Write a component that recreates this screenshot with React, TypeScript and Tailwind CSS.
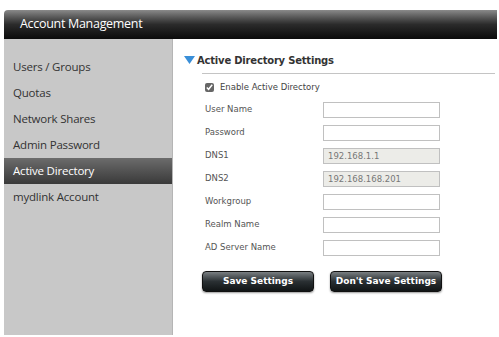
const menuItems = [
	'Users / Groups',
	'Quotas',
	'Network Shares',
	'Admin Password',
	'Active Directory',
	'mydlink Account',
]

const fields = [
	{ label: 'User Name', value: '', disabled: false },
	{ label: 'Password', value: '', disabled: false },
	{ label: 'DNS1', value: '192.168.1.1', disabled: true },
	{ label: 'DNS2', value: '192.168.168.201', disabled: true },
	{ label: 'Workgroup', value: '', disabled: false },
	{ label: 'Realm Name', value: '', disabled: false },
	{ label: 'AD Server Name', value: '', disabled: false },
]

const DarkButton = ({ children }: { children: string }) => (
	<button className="w-[112px] h-[21px] rounded-[4px] border border-[#111] bg-gradient-to-b from-[#7a7f82] via-[#2a3033] to-[#111516] text-white text-[9px] font-bold font-['DejaVu_Sans',sans-serif] shadow-[0_1px_2px_rgba(0,0,0,0.4)]">
		{children}
	</button>
)

const App = () => {
	return (
		<div className="w-[499px] h-[337px] bg-white pt-[10px] pl-[4px] font-['Open_Sans',sans-serif]">
			<div className="w-[493px]">
				<header className="h-[29px] rounded-tl-[4px] bg-gradient-to-b from-[#8a8a8a] via-[#2b2b2b] to-[#0b0b0b] flex items-center pl-[16px]">
					<h1 className="text-white text-[12.5px] tracking-[-0.3px]">
						Account Management
					</h1>
				</header>

				<div className="flex">
					<nav className="w-[169px] h-[296px] bg-[#c8c8c8] border-r border-[#b5b5b5] pt-[15px]">
						{menuItems.map(item => (
							<div
								key={item}
								className={
									item === 'Active Directory'
										? 'h-[26px] flex items-center pl-[9px] text-[11.5px] tracking-[-0.2px] text-white bg-gradient-to-b from-[#6c6c6c] to-[#3a3a3a]'
										: 'h-[26px] flex items-center pl-[9px] text-[11.5px] tracking-[-0.2px] text-[#333]'
								}
							>
								{item}
							</div>
						))}
					</nav>

					<section className="flex-1 pl-[11px] pt-[14px] font-['DejaVu_Sans',sans-serif]">
						<div className="flex items-center h-[14px]">
							<svg
								width="11"
								height="8"
								viewBox="0 0 11 8"
								className="mr-[2px]"
							>
								<path
									d="M0 0 L11 0 L5.5 8 Z"
									fill="#3a8fd8"
								/>
							</svg>
							<h2 className="text-[10px] font-bold text-[#333] tracking-[-0.2px]">
								Active Directory Settings
							</h2>
						</div>
						<div className="ml-[18px] mt-[6px] border-b border-[#c4c4c4] mr-[2px]" />

						<div className="pl-[21px] text-[8.5px] text-[#555]">
							<div className="h-[22px] flex items-center mt-[2px]">
								<input
									type="checkbox"
									defaultChecked
									className="w-[9px] h-[9px] mr-[6px] accent-[#666]"
								/>
								<span className="text-[#444]">Enable Active Directory</span>
							</div>

							{fields.map(field => (
								<div
									key={field.label}
									className="h-[23px] flex items-center"
								>
									<span className="w-[118px]">{field.label}</span>
									<input
										type="text"
										defaultValue={field.value}
										disabled={field.disabled}
										className={
											field.disabled
												? 'w-[117px] h-[16px] border border-[#c0c0c0] bg-[#ecece8] px-[4px] text-[8.5px] text-[#777] outline-none'
												: 'w-[117px] h-[16px] border border-[#c0c0c0] bg-white px-[4px] text-[8.5px] outline-none'
										}
									/>
								</div>
							))}

							<div className="flex gap-[16px] mt-[12px] -ml-[3px]">
								<DarkButton>Save Settings</DarkButton>
								<DarkButton>Don't Save Settings</DarkButton>
							</div>
						</div>
					</section>
				</div>
			</div>
		</div>
	)
}

export default App
